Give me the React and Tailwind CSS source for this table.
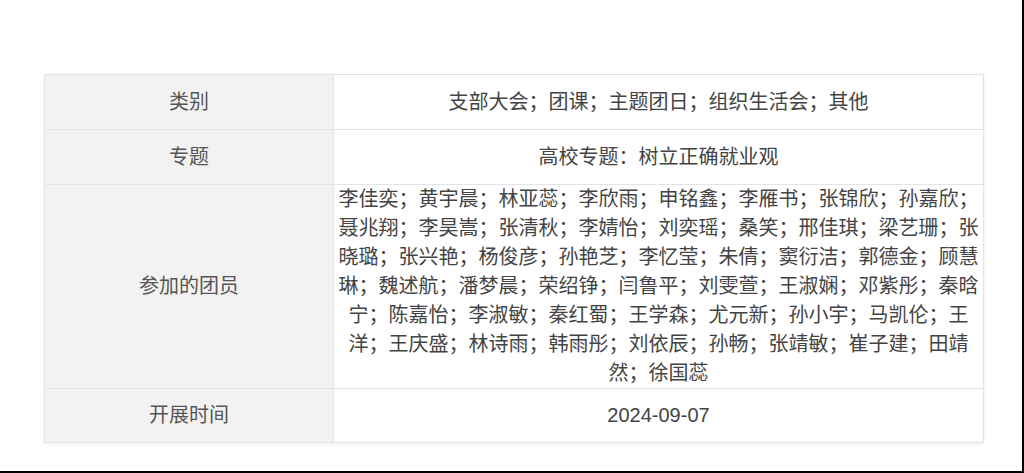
export default function App() {
  const members =
    "李佳奕；黄宇晨；林亚蕊；李欣雨；申铭鑫；李雁书；张锦欣；孙嘉欣；聂兆翔；李昊嵩；张清秋；李婧怡；刘奕瑶；桑笑；邢佳琪；梁艺珊；张晓璐；张兴艳；杨俊彦；孙艳芝；李忆莹；朱倩；窦衍洁；郭德金；顾慧琳；魏述航；潘梦晨；荣绍铮；闫鲁平；刘雯萱；王淑娴；邓紫彤；秦晗宁；陈嘉怡；李淑敏；秦红蜀；王学森；尤元新；孙小宇；马凯伦；王洋；王庆盛；林诗雨；韩雨彤；刘依辰；孙畅；张靖敏；崔子建；田靖然；徐国蕊";

  const rows = [
    { label: "类别", value: "支部大会；团课；主题团日；组织生活会；其他", h: "h-[55px]" },
    { label: "专题", value: "高校专题：树立正确就业观", h: "h-[55px]" },
    { label: "参加的团员", value: members, h: "", multi: true },
    { label: "开展时间", value: "2024-09-07", h: "h-[54px]" },
  ];

  return (
    <div
      className="w-[1024px] h-[473px] bg-white border-r-2 border-b-2 border-black box-border pt-[74px] pl-[44px]"
      style={{ fontFamily: '"Liberation Sans", "Noto Sans CJK SC", sans-serif' }}
    >
      <table className="w-[940px] border-collapse border border-[#e4e4e4] shadow-[0_1px_3px_rgba(0,0,0,0.08)] text-[20px]">
        <tbody>
          {rows.map((r) => (
            <tr key={r.label} className={r.h}>
              <td className="w-[289px] bg-[#f2f2f2] border border-[#e4e4e4] text-center text-[#555] leading-[29px] p-0">
                {r.label}
              </td>
              <td
                className={
                  r.multi
                    ? "border border-[#e4e4e4] text-center text-[#444] leading-[29px] p-0 break-all"
                    : "border border-[#e4e4e4] text-center text-[#444] leading-[29px] p-0"
                }
              >
                {r.value}
              </td>
            </tr>
          ))}
        </tbody>
      </table>
    </div>
  );
}
